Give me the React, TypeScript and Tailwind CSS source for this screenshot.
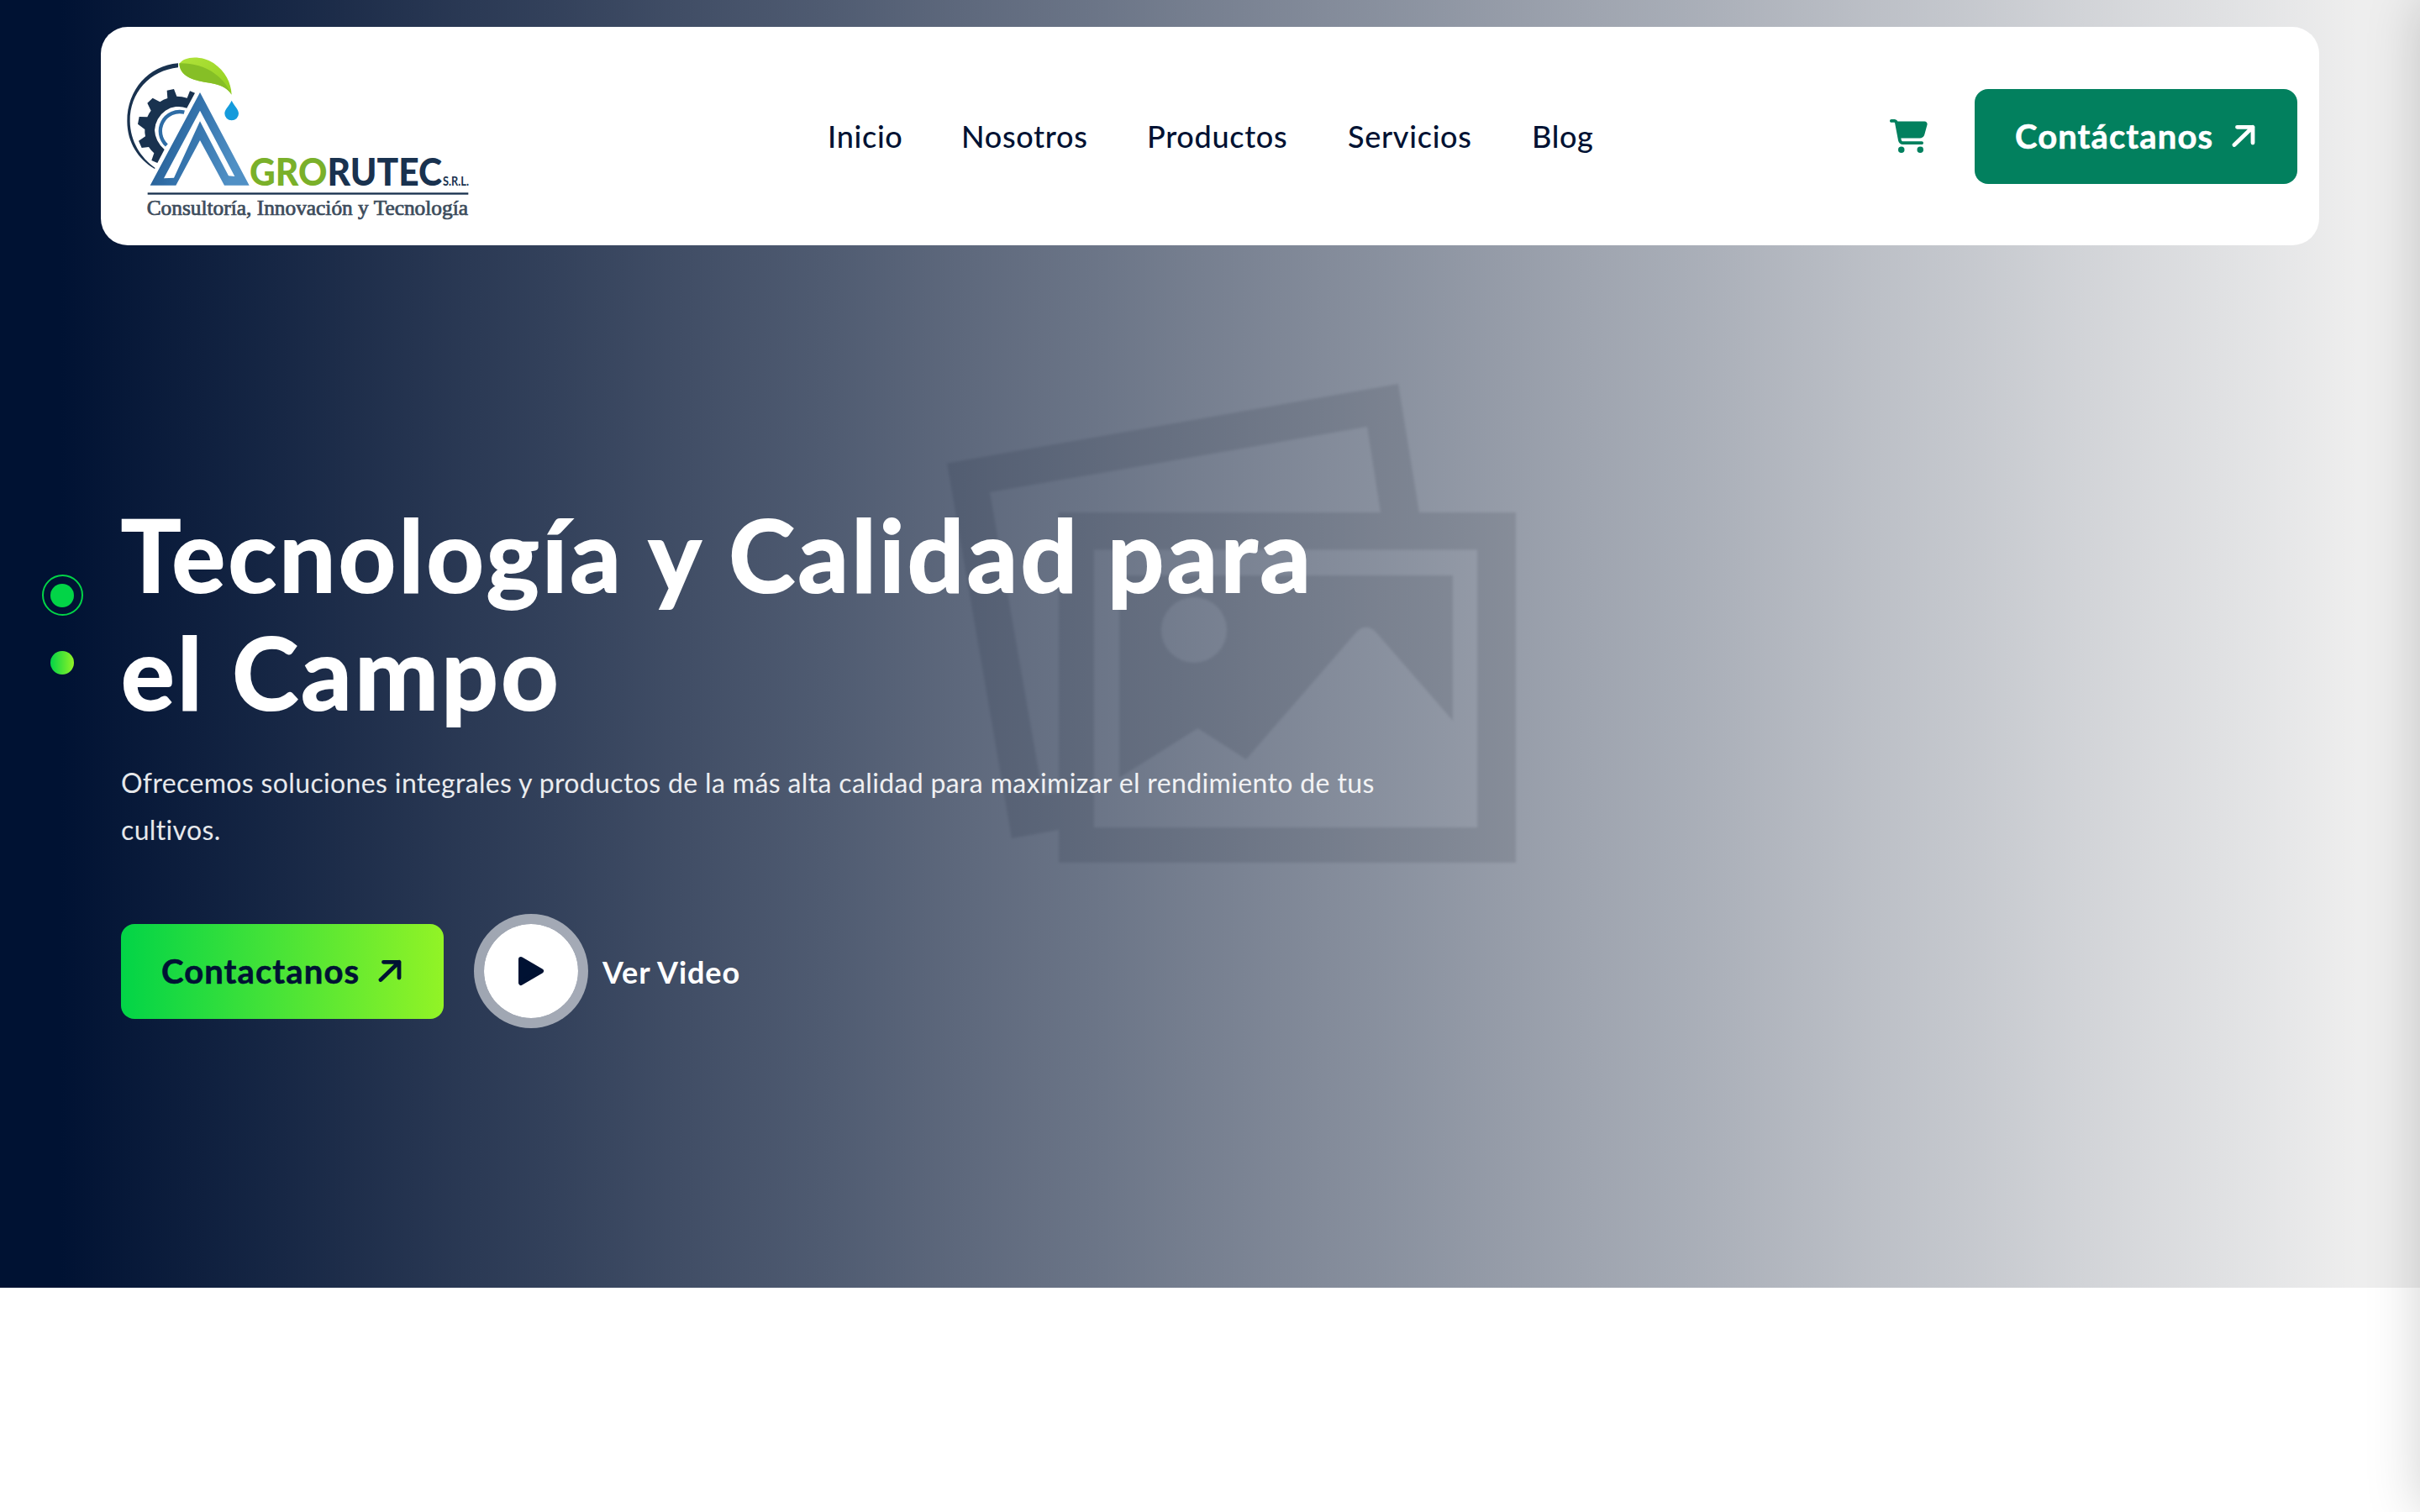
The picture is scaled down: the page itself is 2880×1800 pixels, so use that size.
import React from "react";
import { FaCartShopping } from "react-icons/fa6";

const NAV = [
  { label: "Inicio", cls: "w-[88px]" },
  { label: "Nosotros", cls: "w-[150px]" },
  { label: "Productos", cls: "w-[168px]" },
  { label: "Servicios", cls: "w-[148px]" },
  { label: "Blog", cls: "w-[72px]" },
];

function Arrow() {
  return (
    <svg className="h-[28px] w-[28px]" viewBox="0 0 28 28" fill="none" stroke="currentColor" strokeWidth="4.8" strokeLinecap="round" strokeLinejoin="round">
      <path d="M3 24.5 L25 3.3 M6.5 3.3 H25 V22" />
    </svg>
  );
}

function Logo() {
  return (
    <svg className="mt-[6px] h-[210px] w-[430px]" viewBox="90 120 1290 630">
      <defs>
        <linearGradient id="blue" x1="0" y1="0" x2="1" y2="0.3">
          <stop offset="0" stopColor="#1f5183" />
          <stop offset="0.45" stopColor="#3270a9" />
          <stop offset="1" stopColor="#5090c5" />
        </linearGradient>
        <linearGradient id="leaf" x1="0" y1="0" x2="1" y2="1">
          <stop offset="0" stopColor="#b0e33a" />
          <stop offset="1" stopColor="#93cf1f" />
        </linearGradient>
      </defs>
      <path fill="#19324f" d="M306 166 C200 175 124 260 124 373 C124 450 165 510 222 543 L224 540 C172 503 135 445 134 373 C133 270 205 192 306 181 Z" />
      <path
        fill="#19324f"
        d="M266 263 L291 258 L301 284 Q320 284 338 290 L348 265 L366 272 L337 326 A86 90 0 0 0 222 405 Q224 445 257 474 L232 522 L211 513 L220 487 Q209 477 201 465 L176 468 L165 443 L189 427 Q186 413 187 402 L162 383 L167 357 L196 358 Q201 345 209 335 L196 308 L215 290 L241 304 Q253 295 268 291 Z"
      />
      <path fill="none" stroke="#2e6ca5" strokeWidth="13" d="M328 341 A69 69 0 0 0 265 459" />
      <path fill="url(#blue)" fillRule="evenodd" d="M384 270 L560 602 H471 L384 441 L298 602 H206 Z M384 335 L255 577 L291 575 L384 373 L486 568 L508 570 Z" />
      <path fill="url(#leaf)" d="M310 168 C325 142 385 135 432 165 C475 195 495 235 497 278 C480 250 445 238 400 233 C345 224 312 205 310 168 Z" />
      <path fill="#86bf26" d="M310 166 C390 165 462 200 497 278 C480 250 445 238 400 233 C345 224 312 205 310 166 Z" />
      <path fill="#159bdc" d="M497 299 C508 320 522 330 522 346 A25 24 0 0 1 472 346 C472 330 487 320 497 299 Z" />
      <text x="561" y="602" fontFamily="Lato, sans-serif" fontWeight="900" fontSize="139" fill="#7ab02a" textLength="687" lengthAdjust="spacingAndGlyphs">
        GRO<tspan fill="#19324f">RUTEC</tspan>
      </text>
      <text x="1251" y="602" fontFamily="Lato, sans-serif" fontSize="43" fontWeight="700" fill="#19324f" textLength="93" lengthAdjust="spacingAndGlyphs">S.R.L.</text>
      <rect x="197" y="628" width="1145" height="7" fill="#19324f" />
      <text x="194" y="708" fontFamily="'Liberation Serif', serif" fontSize="73" fill="#3d4c5c" stroke="#3d4c5c" strokeWidth="2.2" textLength="1147" lengthAdjust="spacingAndGlyphs">Consultoría, Innovación y Tecnología</text>
    </svg>
  );
}

function Placeholder() {
  return (
    <svg className="absolute left-[1120px] top-[450px] h-[590px] w-[700px] blur-[1.5px]" viewBox="1120 450 700 590" fill="#d4d4d4">
      <path d="M1127 551.5 L1664 457 L1689 610 H1643 L1627 508 L1178 586 L1241 946 L1260 943 V988 L1204 998 Z" />
      <path fillRule="evenodd" d="M1260 610 H1804 V1027 H1260 Z M1302 654.500 V985 H1758 V654.500 Z" />
      <path fillRule="evenodd" d="M1332 685 H1729 V858 L1637 752 Q1624 740 1612 755 L1483 904 L1425.500 867 L1332 926 Z M1382 750 a39 39 0 1 0 78 0 a39 39 0 1 0 -78 0 Z" />
    </svg>
  );
}

export default function App() {
  return (
    <div className="relative h-[1800px] w-[2880px] overflow-hidden bg-white font-['Lato',sans-serif] text-[#001233]">
      <section className="relative h-[1533px] overflow-hidden bg-[#eeeeee]">
        <Placeholder />
        <div className="absolute inset-0 bg-[linear-gradient(90deg,#001233_2.5%,rgba(0,18,51,0)_97.500%)]" />
        <div className="relative flex h-full flex-col pt-8">
          <header className="mx-[120px] flex h-[260px] shrink-0 items-center rounded-[32px] bg-white pr-[26px]">
            <div className="ml-5 w-[845px]"><Logo /></div>
            <nav className="flex flex-1 items-center gap-[71px] text-[36px] font-medium leading-[54px] tracking-[0.7px]">
              {NAV.map((n) => (
                <a key={n.label} className={`${n.cls} whitespace-nowrap`}>{n.label}</a>
              ))}
            </nav>
            <FaCartShopping className="mr-[56px] h-[40px] w-[45px] text-[#02805e]" />
            <a className="flex h-[113px] w-[384px] items-center justify-between rounded-2xl bg-[#02805e] pl-12 pr-[50px] text-[40px] font-bold tracking-[1.1px] text-white">
              <span className="whitespace-nowrap [-webkit-text-stroke:0.6px_#fff]">Contáctanos</span>
              <Arrow />
            </a>
          </header>
          <div className="flex">
            <div className="flex w-[144px] flex-col items-center pt-[392px]">
              <div className="ml-1 flex h-[49px] w-[49px] items-center justify-center rounded-full border-2 border-[#02d447]">
                <div className="h-7 w-7 rounded-full bg-[#02d447]" />
              </div>
              <div className="ml-1 mt-[42px] h-7 w-7 rounded-full bg-[linear-gradient(90deg,#02d447,#92f326)]" />
            </div>
            <div className="pt-[297px]">
              <h1 className="whitespace-nowrap text-[119px] font-bold leading-[140px] tracking-[3.4px] text-white [-webkit-text-stroke:2px_#fff]">
                Tecnología y Calidad para<br />el Campo
              </h1>
              <p className="mt-[35px] whitespace-nowrap text-[32px] leading-[56px] tracking-[0.36px] text-white/90">
                Ofrecemos soluciones integrales y productos de la más alta calidad para maximizar el rendimiento de tus<br />cultivos.
              </p>
              <div className="mt-[72px] flex items-center">
                <a className="flex h-[113px] w-[384px] items-center justify-between rounded-2xl bg-[linear-gradient(90deg,#02d447,#92f326)] pl-12 pr-[50px] text-[40px] font-bold tracking-[1.1px]">
                  <span className="whitespace-nowrap [-webkit-text-stroke:0.6px_#001233]">Contactanos</span>
                  <Arrow />
                </a>
                <div className="ml-9 flex h-[136px] w-[136px] items-center justify-center rounded-full border-[12px] border-white/55 bg-white bg-clip-padding">
                  <svg className="h-[36px] w-[32px]" viewBox="0 0 32 36" fill="#001233" stroke="#001233" strokeWidth="6" strokeLinejoin="round">
                    <path d="M4 4 L28 18 L4 32 Z" />
                  </svg>
                </div>
                <span className="ml-[17px] mt-[2px] whitespace-nowrap text-[36px] font-bold tracking-[0.9px] text-white">Ver Video</span>
              </div>
            </div>
          </div>
        </div>
      </section>
      <div className="absolute left-[2880px] top-0 h-[1800px] w-[600px] shadow-[0_0_60px_rgba(0,0,0,0.18)]" />
    </div>
  );
}
